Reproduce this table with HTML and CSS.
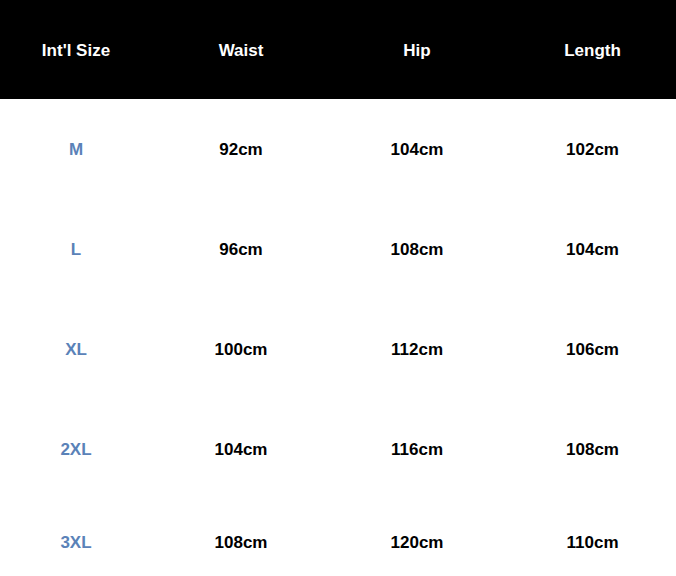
FILE: index.html
```html
<!DOCTYPE html>
<html>
<head>
<meta charset="utf-8">
<link rel="stylesheet" href="styles.css">
</head>
<body>
<div class="table">
  <div class="row head">
    <div class="cell">Int'l Size</div>
    <div class="cell">Waist</div>
    <div class="cell">Hip</div>
    <div class="cell">Length</div>
  </div>
  <div class="row">
    <div class="cell size">M</div>
    <div class="cell">92cm</div>
    <div class="cell">104cm</div>
    <div class="cell">102cm</div>
  </div>
  <div class="row">
    <div class="cell size">L</div>
    <div class="cell">96cm</div>
    <div class="cell">108cm</div>
    <div class="cell">104cm</div>
  </div>
  <div class="row">
    <div class="cell size">XL</div>
    <div class="cell">100cm</div>
    <div class="cell">112cm</div>
    <div class="cell">106cm</div>
  </div>
  <div class="row">
    <div class="cell size">2XL</div>
    <div class="cell">104cm</div>
    <div class="cell">116cm</div>
    <div class="cell">108cm</div>
  </div>
  <div class="row last">
    <div class="cell size">3XL</div>
    <div class="cell">108cm</div>
    <div class="cell">120cm</div>
    <div class="cell">110cm</div>
  </div>
</div>
</body>
</html>
```

FILE: styles.css
```css
html, body {
  margin: 0;
  padding: 0;
  background: #ffffff;
}
body {
  font-family: "Liberation Sans", Arial, sans-serif;
  font-weight: bold;
  font-size: 17px;
  color: #000000;
  overflow: hidden;
}
.table {
  width: 676px;
}
.row {
  display: grid;
  grid-template-columns: 152px 178px 174px 172px;
  height: 100px;
  align-items: center;
}
.row.head {
  background: #000000;
  color: #ffffff;
  height: 99px;
}
.row.last {
  height: 86px;
}
.cell {
  text-align: center;
  line-height: 20px;
  padding-top: 2px;
}
.cell:last-child {
  padding-left: 5px;
}
.size {
  color: #5a82b8;
}
```
